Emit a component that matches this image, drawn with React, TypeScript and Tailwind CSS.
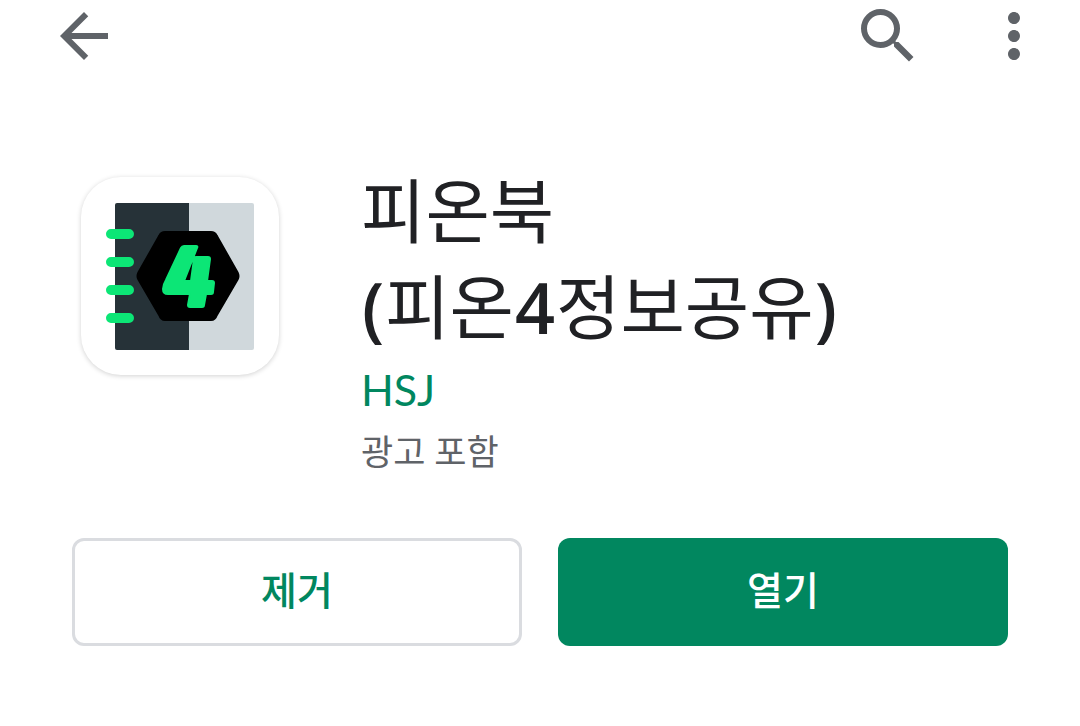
import type { ReactNode } from 'react';

function IconButton({ label, children }: { label: string; children: ReactNode }) {
  return (
    <button type="button" aria-label={label} className="block text-[#5f6368]">
      {children}
    </button>
  );
}

function TopBar() {
  return (
    <header className="flex h-[72px] items-center justify-between pr-[30px] pl-12">
      <IconButton label="뒤로">
        <svg viewBox="0 0 24 24" className="size-[72px]" fill="currentColor">
          <path d="M20 11H7.83l5.59-5.59L12 4l-8 8 8 8 1.41-1.41L7.83 13H20v-2z" />
        </svg>
      </IconButton>
      <div className="flex items-center gap-[54px]">
        <IconButton label="검색">
          <svg viewBox="0 0 24 24" className="size-[72px]" fill="currentColor">
            <path d="M15.5 14h-.79l-.28-.27A6.471 6.471 0 0 0 16 9.5 6.5 6.5 0 1 0 9.5 16c1.61 0 3.09-.59 4.23-1.57l.27.28v.79l5 4.99L20.49 19l-4.99-5zm-6 0C7.01 14 5 11.99 5 9.5S7.01 5 9.5 5 14 7.01 14 9.5 11.99 14 9.5 14z" />
          </svg>
        </IconButton>
        <IconButton label="옵션 더보기">
          <svg viewBox="0 0 24 24" className="size-[72px]" fill="currentColor">
            <path d="M12 8c1.1 0 2-.9 2-2s-.9-2-2-2-2 .9-2 2 .9 2 2 2zm0 2c-1.1 0-2 .9-2 2s.9 2 2 2 2-.9 2-2-.9-2-2-2zm0 6c-1.1 0-2 .9-2 2s.9 2 2 2 2-.9 2-2-.9-2-2-2z" />
          </svg>
        </IconButton>
      </div>
    </header>
  );
}

function AppIcon() {
  return (
    <div className="size-[198px] shrink-0 overflow-hidden rounded-[40px] bg-white shadow-[0_1px_5px_rgba(0,0,0,0.18)]">
      <svg viewBox="0 0 198 198" className="size-full" role="img" aria-label="피온북">
        {/* Notebook cover */}
        <path d="M36 26h73v147H36a2 2 0 0 1-2-2V28a2 2 0 0 1 2-2z" fill="#263238" />
        <path d="M108 26h63a2 2 0 0 1 2 2v143a2 2 0 0 1-2 2h-63z" fill="#d0d8dc" />
        {/* Binding rings */}
        <g stroke="#0ce676" strokeWidth="10" strokeLinecap="round">
          <path d="M30 57h18M30 85h18M30 113h18M30 141h18" />
        </g>
        {/* Badge */}
        <path
          d="M84 58h46q2 0 3 2l21 37q1 2 0 4l-21 36q-1 3-3 3H84q-2 0-3-3L60 101q-1-2 0-4l21-37q1-2 3-2z"
          fill="#000"
          stroke="#000"
          strokeWidth="8"
          strokeLinejoin="round"
        />
        {/* Numeral mark */}
        <path
          d="M103 69h12q2 0 1 2l-13 33h7l3-22q0-2 2-2h12q2 0 2 2l-3 22h5q2 0 2 2l-1 9q0 2-2 2h-5l-2 11q0 2-2 2h-12q-2 0-2-2l2-11H87q-5 0-5-5 0-4 3-9l15-32q1-2 3-2z"
          fill="#0ce676"
          stroke="#0ce676"
          strokeWidth="2"
          strokeLinejoin="round"
        />
      </svg>
    </div>
  );
}

/** Digits and brackets in the title sit in the Latin face, one step heavier. */
function Latin({ children }: { children: ReactNode }) {
  return (
    <span className="mx-px font-['Open_Sans',sans-serif] leading-none font-semibold">
      {children}
    </span>
  );
}

export default function App() {
  return (
    <div className="bg-white pb-20 font-['Lato','Noto_Sans_CJK_KR',sans-serif]">
      <TopBar />
      <main className="px-[72px] pt-[88px]">
        <section className="flex items-start gap-[82px] pl-[9px]">
          <div className="pt-[17px]">
            <AppIcon />
          </div>
          <div>
            <h1 className="font-['Noto_Sans_CJK_KR',sans-serif] text-[70px] leading-[96px] text-[#202124]">
              피온북
              <br />
              <Latin>(</Latin>피온<Latin>4</Latin>정보공유<Latin>)</Latin>
            </h1>
            <a href="#developer" className="block text-[43px] leading-[76px] text-[#01875f]">
              HSJ
            </a>
            <p className="text-[35px] leading-[46px] text-[#5f6368]">광고 포함</p>
          </div>
        </section>

        <div className="mt-16 grid grid-cols-2 gap-9 text-[39px] font-medium">
          <button
            type="button"
            className="h-[108px] rounded-xl border-[3px] border-[#dadce0] pb-1 text-[#01875f]"
          >
            제거
          </button>
          <button type="button" className="h-[108px] rounded-xl bg-[#01875f] pb-1 text-white">
            열기
          </button>
        </div>
      </main>
    </div>
  );
}
